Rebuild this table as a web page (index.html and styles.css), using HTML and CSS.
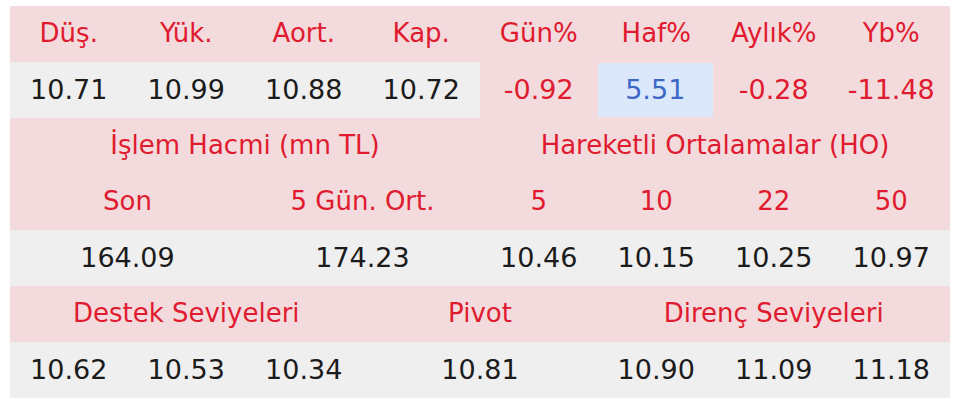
FILE: index.html
```html
<!DOCTYPE html>
<html lang="tr">
<head>
<meta charset="utf-8">
<link rel="stylesheet" href="styles.css">
</head>
<body>
<div class="table">
  <div class="c h">Düş.</div>
  <div class="c h">Yük.</div>
  <div class="c h">Aort.</div>
  <div class="c h">Kap.</div>
  <div class="c h">Gün%</div>
  <div class="c h">Haf%</div>
  <div class="c h">Aylık%</div>
  <div class="c h">Yb%</div>

  <div class="c v">10.71</div>
  <div class="c v">10.99</div>
  <div class="c v">10.88</div>
  <div class="c v">10.72</div>
  <div class="c v neg">-0.92</div>
  <div class="c v pos"><span class="pos-box">5.51</span></div>
  <div class="c v neg">-0.28</div>
  <div class="c v neg">-11.48</div>

  <div class="c h s4">İşlem Hacmi (mn TL)</div>
  <div class="c h s4">Hareketli Ortalamalar (HO)</div>

  <div class="c h s2">Son</div>
  <div class="c h s2">5 Gün. Ort.</div>
  <div class="c h">5</div>
  <div class="c h">10</div>
  <div class="c h">22</div>
  <div class="c h">50</div>

  <div class="c v s2">164.09</div>
  <div class="c v s2">174.23</div>
  <div class="c v">10.46</div>
  <div class="c v">10.15</div>
  <div class="c v">10.25</div>
  <div class="c v">10.97</div>

  <div class="c h s3">Destek Seviyeleri</div>
  <div class="c h s2">Pivot</div>
  <div class="c h s3">Direnç Seviyeleri</div>

  <div class="c v">10.62</div>
  <div class="c v">10.53</div>
  <div class="c v">10.34</div>
  <div class="c v s2">10.81</div>
  <div class="c v">10.90</div>
  <div class="c v">11.09</div>
  <div class="c v">11.18</div>
</div>
</body>
</html>
```
FILE: styles.css
```css
html, body {
  margin: 0;
  padding: 0;
  background: #ffffff;
}
body {
  padding: 6px 10px 0 10px;
  font-family: "DejaVu Sans", "Noto Sans", sans-serif;
}
.table {
  width: 940px;
  display: grid;
  grid-template-columns: repeat(8, 1fr);
  grid-auto-rows: 56px;
}
.c {
  display: flex;
  align-items: center;
  justify-content: center;
  white-space: nowrap;
  padding-bottom: 2px;
}
.h {
  background: #f2dadd;
  color: #e01b2f;
  font-size: 26px;
}
.v {
  background: #efefef;
  color: #1b1b1b;
  font-size: 27px;
}
.v.neg {
  background: #f2dadd;
  color: #e01b2f;
}
.v.pos {
  background: #f2dadd;
  align-items: stretch;
  padding: 1px 2px 1px 0;
}
.pos-box {
  flex: 1;
  display: flex;
  align-items: center;
  justify-content: center;
  padding-bottom: 2px;
  background: #dbe8fb;
  color: #3d68c6;
}
.s2 { grid-column: span 2; }
.s3 { grid-column: span 3; }
.s4 { grid-column: span 4; }
```
